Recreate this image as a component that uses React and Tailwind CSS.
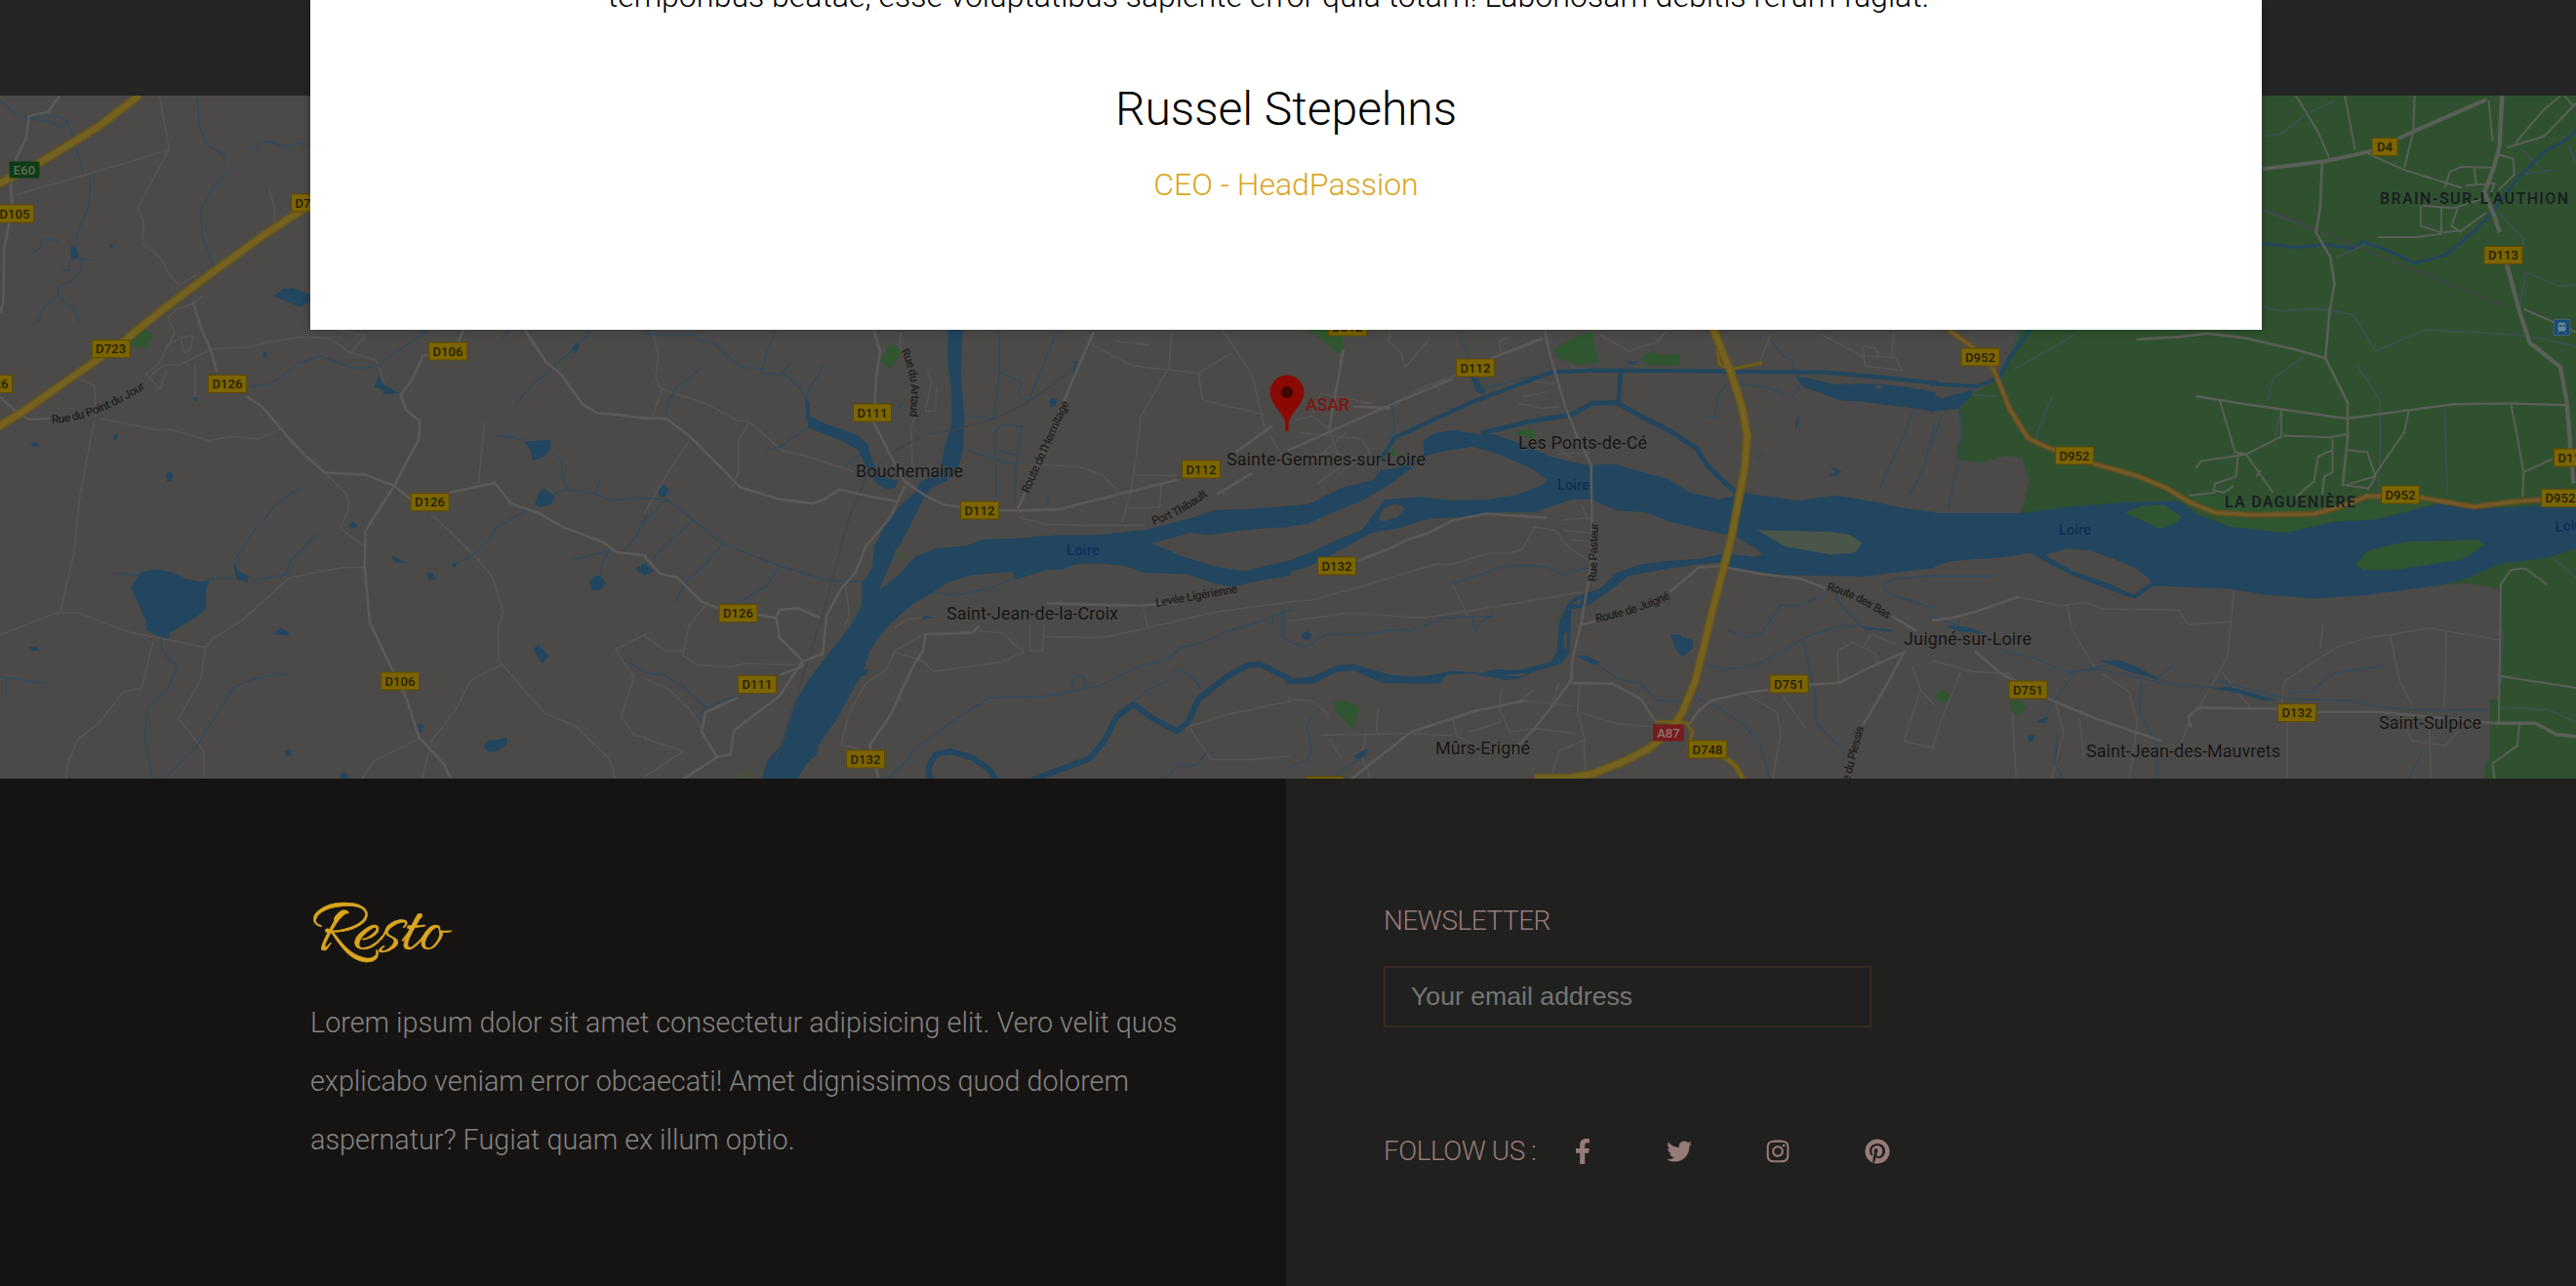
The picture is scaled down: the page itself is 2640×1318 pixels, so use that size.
import React from "react";
import { FaFacebookF, FaTwitter, FaInstagram, FaPinterest } from "react-icons/fa";

const WATER = "#22465f";
const LAND = "#4b4a48";
const GREEN = "#305130";

// Each tile lists shapes in its own grid; `transform` places the grid on the map.
const TILES = [
  {
    transform: "translate(0 80) scale(0.42092 0.45918)",
    water: [
      "M318 1137L345 1102 380 1096 415 1102 450 1118 485 1124 510 1122 502 1140 501 1186 480 1202 413 1238 410 1251 380 1244 356 1232 355 1210Z",
      "M569 1085L580 1100 605 1112 602 1126 575 1118Z",
      "M666 486L690 471 712 469 756 483 756 500 730 511 708 503Z",
      "M173 372L188 380 192 402 173 404Z",
      "M910 690L922 664 930 682 972 703 935 706 928 694Z",
      "M1275 812L1300 810 1340 808 1341 828 1322 846 1295 855 1293 832Z",
      "M1302 952L1312 926 1326 916 1351 934 1342 950 1318 958Z",
      "M1434 1125L1445 1112 1462 1110 1475 1128 1462 1142 1442 1144Z",
      "M1298 1275L1309 1265 1338 1290 1320 1307Z",
      "M1177 1492L1190 1478 1210 1477 1235 1471 1236 1484 1215 1501 1190 1504Z",
      "M404 885L410 878 422 882 418 900 407 902Z",
      "M952 1066L968 1072 989 1082 962 1082Z",
      "M1037 1104L1053 1104 1061 1117 1047 1121Z",
      "M848 1000L860 989 871 1000 858 1005Z",
      "M662 1240L685 1227 704 1238 700 1245Z",
      "M690 1503L702 1498 711 1508 700 1514Z",
      "M1017 1443L1030 1443 1027 1460 1019 1458Z",
      "M828 1555L840 1548 850 1562 828 1568Z",
      "M638 614L648 611 651 622 642 624Z",
      "M74 814L90 813 97 821 82 823Z",
      "M276 796L288 793 285 805 279 808Z",
      "M72 1270L92 1269 92 1278 72 1279Z",
      "M470 712L480 711 482 720 474 721Z",
      "M1390 606L1402 590 1412 598 1400 615Z",
      "M1100 1085L1112 1080 1110 1090 1102 1091Z",
      "M1548 1095L1575 1080 1575 1108 1555 1103Z",
      "M266 370L275 370 274 380 268 380Z",
    ],
    green: ["M318 580L350 558 370 574 356 604 318 597Z"],
    streams: [
      "M0 50L45 85 130 100 150 108 165 95 205 215",
      "M70 88L140 85 165 96",
      "M480 40L485 110 510 155 545 170 546 188",
      "M606 158L655 141 690 155 725 145 756 150",
      "M565 198L515 250 490 295 492 350 522 426",
      "M220 218L217 285 188 345 182 370",
      "M78 394L100 376 102 360 138 362 140 372",
      "M190 400L202 405 235 408",
      "M200 405L198 430 180 450 142 465 140 484 105 515 98 535 80 552",
      "M140 484L180 515 194 545",
      "M172 404L168 430 150 427",
      "M612 688L660 683 720 640 780 620 860 648 915 644 1040 565",
      "M1208 797L1275 808 M1208 797L1250 800",
      "M1255 728L1300 682 1400 603 1440 563",
      "M1341 832L1367 855 1370 890 1383 922",
      "M1351 927L1380 918 1450 928 1485 942 1575 938",
      "M1462 895L1450 928",
      "M1290 960L1210 1003 1190 1030 1155 1062 1105 1088",
      "M728 915L680 945 610 1020 572 1075 572 1100",
      "M770 1018L705 1080 698 1108 615 1122",
      "M570 1115L510 1118 500 1126",
      "M278 1105L345 1110",
      "M392 1250L395 1280 430 1315 410 1360 360 1405 352 1470 372 1568",
      "M697 1329L620 1340 570 1360 535 1410 480 1490 405 1560",
      "M0 1336L112 1352 M14 1338L14 1375",
      "M1462 1110L1470 1075 1485 1055 1395 1074",
      "M1520 1058L1550 1020 1575 975",
      "M1520 1298L1575 1330",
      "M1215 592L1240 562",
    ],
    roads: [
      "M145 40L118 75 70 85 65 130 40 180 26 240 30 290 10 380 8 500 0 525",
      "M0 712L40 745 70 762 120 760",
      "M470 500L490 560 512 605 528 655",
      "M600 710L640 735 700 800 740 840 792 881 888 885 960 910 1000 940",
      "M1095 925L1205 904 1245 950 1310 970 1370 1002 1470 1036 1500 1058 1575 1066",
      "M1128 562L1112 600 1030 620 1005 670 975 708 990 742 1022 765 1020 805 960 910 890 1010 888 1090 900 1215 950 1310 990 1385 1020 1472 1080 1530 1100 1568",
      "M1278 563L1330 635 1365 660 1420 730 1455 748 1490 750 1575 760",
    ],
    lanes: [
      "M388 40L412 158 335 290 350 320 347 370 390 400 410 435 437 462 478 440",
      "M412 160L220 213 40 260",
      "M655 245L668 290 668 330",
      "M160 1568L165 1530 190 1475 240 1440 300 1370 345 1362 372 1260",
      "M0 1243L140 1193 190 1194 320 1238 500 1270 520 1250 590 1210 705 1115 830 1093 888 1092",
      "M500 1270L490 1340 435 1430 495 1500 498 1568",
      "M228 770L195 930 180 1060 147 1190",
      "M245 760L380 785 420 786 510 810 560 800 630 805 690 780",
      "M370 660L400 640 440 640 512 605 610 600 650 590 730 578 800 580 850 612 915 630 945 700 972 700",
      "M495 485L465 505 430 515 410 535 425 570 385 640 355 660 390 695 405 650",
      "M440 580L450 615 465 600 470 575 440 580 400 600",
      "M792 881L845 930 850 960 828 1005 888 1045",
      "M1180 765L1165 905",
      "M1050 975L1100 1015 1165 1075 1200 1115 1225 1190 1212 1230 1215 1300 1280 1370 1330 1420 1400 1445 1485 1520 1500 1568",
      "M1220 1310L1145 1345 1110 1410 1050 1480 1028 1568",
      "M1020 1475L910 1525 880 1565",
      "M1545 1340L1498 1275 1575 1240 M1545 1335L1512 1425 1545 1468 1575 1470",
      "M180 668L230 685 233 755 M475 640L475 710 M815 560L890 575 855 612",
    ],
    highways: [["M-5 237L100 187 240 108 340 38", 9], ["M-5 779L60 742 180 665 300 588 400 514 520 432 640 352 760 280", 9]],
  },
  {
    transform: "translate(660 330) scale(0.42092 0.33333)",
    water: [
      "M739 20L776 20 772 160 780 290 778 380 768 440 740 485 700 510 680 545 650 620 600 740 572 825 620 778 660 722 710 695 785 688 825 668 910 665 1000 655 1100 655 1220 640 1340 600 1390 578 1470 575 1575 565 1575 630 1500 635 1370 655 1330 648 1235 680 1310 720 1400 755 1460 765 1575 733 1575 778 1480 800 1430 815 1380 800 1320 775 1220 772 1170 750 1100 742 1050 745 1015 762 980 762 905 792 895 768 800 778 740 800 700 835 650 870 590 940 550 1010 535 1070 500 1150 470 1220 425 1300 420 1330 395 1360 370 1410 285 1410 300 1350 340 1290 360 1190 400 1100 500 940 530 870 530 800 555 760 560 690 600 600 640 545 665 520 670 495 720 460 735 370 750 310 748 200 740 130Z",
      "M392 238L403 245 405 290 440 312 515 345 545 375 556 430 575 470 618 490 612 510 590 514 565 495 540 440 520 392 480 365 400 325 395 290Z",
      "M988 235L1006 237 1004 258 990 262Z",
      "M35 520L47 498 62 515 50 538 36 535Z",
      "M0 738L25 768 0 780Z",
      "M1048 118L1058 122 1055 152 1044 155Z",
      "M674 908L690 902 705 908 680 915Z",
      "M530 1070L550 1065 540 1085 524 1092Z",
    ],
    green: ["M575 120L598 66 622 80 622 105 600 142Z"],
    paleGreen: ["M612 694L650 728 625 740 612 712Z", "M222 1390L265 1378 255 1408 225 1408Z"],
    streams: [
      "M0 38L130 38 130 55 165 62 235 138 285 145 290 158 345 162 385 210 395 245",
      "M320 28L298 90 288 150 M357 128L335 158",
      "M438 135L400 210 394 238",
      "M142 140L80 200 60 240 52 290",
      "M410 315L330 385 295 395",
      "M523 408L490 442",
      "M0 540L60 550 130 620 190 682 330 750 440 792 535 800",
      "M190 682L150 745 100 800 75 865 M330 755L300 810 230 862",
      "M120 608L60 680 20 730 M55 545L0 618",
      "M0 1078L50 1085 95 1120 130 1165 155 1185 228 1148 M155 1185L118 1225",
      "M865 28L865 155 920 182 912 225 935 245 1005 30",
      "M865 155L852 298 780 288",
      "M780 395L905 437 M858 540L855 335 875 315 920 322 905 440 905 560 M860 395L910 410",
      "M700 832L760 840 840 820 895 790",
      "M590 1405L640 1350 660 1310 760 1220 840 1155 970 1152 1110 1118 1200 1060 1270 1040 1310 1000 1360 985 1420 950 1480 930 1575 885",
      "M1042 1132L1044 1095 1062 1085 1075 1100 1072 1132",
      "M1195 1165L1220 1135 1275 1105 1295 1070 1330 1085 1360 1132",
      "M1270 1405L1300 1360 1345 1365 1372 1320",
      "M985 540L982 565 M618 265L628 250",
      "M1530 895L1530 935 M1555 880L1555 970 1575 985",
    ],
    rivers: [
      ["M698 1408L692 1370 710 1330 745 1320 800 1340 840 1375 860 1410", 6],
      ["M945 1408L1085 1342 1120 1290 1150 1215 1192 1175 1240 1220 1298 1258 1325 1230 1350 1160 1420 1090 1470 1055 1500 1052 1575 1100", 6],
    ],
    roads: [
      "M0 295L55 298 110 350 235 508 330 545 410 558 440 545 475 515 520 528 615 552",
      "M560 28L575 90 565 170 560 310 600 410 635 490 680 530 730 562 775 570",
      "M865 580L910 580 1010 576 1170 525 1300 485",
      "M1395 530L1480 465 M910 575L960 435 1060 130 1095 30",
      "M635 505L600 600 540 690 515 770 480 820 445 900 435 1020 385 1045 330 1150 220 1255 210 1330 178 1338 90 1410",
      "M322 910L330 885 375 880 430 910 M322 910L330 970 385 1040 385 1060 330 1085",
      "M275 900L322 910 M178 1338L140 1260 150 1200 228 1155",
      "M0 720L40 775 80 785 140 860 180 880",
      "M570 1400L550 1300 600 1210 650 1070 680 1010 685 960 800 955 815 935",
      "M980 865L1200 872 1300 865 M1440 400L1530 320",
    ],
    lanes: [
      "M20 28L35 100 28 170 40 205 150 250 230 305 255 305 335 395 390 410 510 460",
      "M45 205L20 290 M255 310L230 365 230 460 215 510",
      "M110 365L60 460 0 590",
      "M150 870L110 930 95 1025 130 1055 210 1060 250 1050 390 1055",
      "M0 965L50 1010 95 1010 M0 1095L60 1130 110 1190 140 1250 M0 1280L95 1320 0 1400",
      "M625 30L625 90 M660 290L650 330 655 470",
      "M680 960L640 990 610 1010 590 1070 540 1110 500 1200 480 1300 545 1320",
      "M940 930L940 1010 970 1010 975 930 M815 950L870 955 925 1015 870 1045 705 1075 675 1040 610 1015",
      "M975 968L1120 970 1225 940 1400 890 1575 860 M1215 875L1228 945",
      "M1285 28L1278 140 1210 290 1200 400 1185 520 1165 615",
      "M1090 70L1190 135 1350 158 1430 95 M1350 158L1360 240 1510 285",
      "M1410 28L1480 160 1510 320 1575 450 M1150 60L1230 70",
      "M970 440L1060 445 1115 470 1155 520 M910 600L980 622 1080 625 1220 625 M1195 470L1300 472 M1260 495L1255 570 1180 570",
      "M610 940L640 915 700 905 M1300 1255L1410 1210 1575 1165 M1330 1250L1380 1345 1480 1345 1575 1335",
      "M690 155L700 180 685 275 710 272 712 200 M490 800L500 900 490 930",
    ],
    rails: ["M1060 120L1000 190 930 250 850 300 760 330 690 345 610 395 540 480 500 600 470 740 430 920 375 1140 320 1350"],
  },
  {
    transform: "translate(1320 330) scale(0.42092 0.33333)",
    water: [
      "M-5 567L50 560 130 510 210 485 225 455 260 450 330 420 330 365 350 345 400 332 465 345 500 345 580 380 640 415 740 445 750 438 800 438 870 465 920 480 980 525 1050 545 1120 527 1240 550 1330 533 1410 548 1490 570 1575 585 1575 757 1480 770 1400 782 1200 778 1130 765 1070 755 1060 738 1000 745 920 760 830 780 790 820 740 865 715 880 690 882 688 940 685 1020 665 1050 600 1075 560 1098 530 1100 440 1080 385 1085 370 1112 230 1110 160 1072 120 1075 60 1112 -5 1112 -5 1098 60 1090 120 1055 160 1053 250 1085 300 1090 340 1088 400 1072 470 1080 500 1068 560 1070 640 1045 655 1015 660 920 680 870 700 845 760 820 800 770 860 745 920 735 1000 728 1060 712 1140 722 1155 715 1140 695 1090 660 1000 635 930 615 870 585 800 580 740 545 690 545 600 585 500 585 420 600 340 605 280 630 200 650 130 700 50 752 -5 772 -5 738 60 705 120 670 180 640 210 590 235 545 320 538 400 548 490 545 560 530 620 500 632 485 600 455 520 410 450 383 385 395 340 410 300 450 240 505 180 550 100 590 50 620 -5 630Z",
      "M1235 170L1260 170 1330 192 1400 190 1450 192 1530 205 1575 215 1575 275 1500 262 1400 245 1340 240 1300 220 1255 200Z",
      "M445 168L462 175 472 205 482 212 476 222 460 215Z",
      "M932 962L955 960 958 970 985 975 985 1005 960 1028 945 1010Z",
      "M34 958L48 950 58 962 48 978 36 975Z",
      "M1315 470L1335 462 1318 440 1348 460 1335 475Z",
      "M818 122L858 120 840 132Z",
      "M700 1025L725 1025 762 1048 745 1055Z",
      "M1240 290L1244 292 1240 328 1235 325Z",
      "M1395 935L1475 948 1470 952 1405 945Z",
      "M160 1335L190 1312 196 1318 172 1345Z",
    ],
    green: [
      "M45 22L137 22 132 95 125 98Z",
      "M645 85L700 45 740 30 755 125 700 130 655 110Z",
      "M860 110L885 90 905 102 953 100 953 132 870 132Z",
      "M552 342L575 330 600 332 600 365Z",
      "M246 412L256 385 265 412Z",
      "M110 1168L130 1162 175 1185 160 1255 115 1195Z",
    ],
    sand: ["M1143 640L1320 645 1370 655 1397 680 1380 710 1320 715 1210 690Z"],
    islands: ["M220 610L232 572 262 558 286 572 268 600 235 613Z", "M672 1000L672 960 680 950 678 1010Z", "M520 1088L585 1078 570 1090Z", "M690 865L715 850 710 872Z", "M1428 192L1448 195 1440 208 1430 205Z"],
    streams: [
      "M410 28L435 90 470 200 M475 205L600 165",
      "M253 240L260 320 250 360",
      "M0 985L45 998 95 960 180 962 260 945 300 950 380 910 500 905",
      "M400 805L530 748 630 752 665 775 730 755 M500 900L475 915 455 950 448 905",
      "M60 1205L45 1240 58 1310 48 1345 0 1370",
      "M740 1040L800 1095 860 1115 900 1165 970 1165 990 1140 1000 1160 1060 1195 1110 1240 1150 1300 1170 1400",
      "M1020 1055L1060 1068 1130 1060 1200 1015 1260 970 1330 940 1390 932",
      "M1070 945L1110 970 1150 960 1200 870 1240 875 1310 835",
      "M1255 980L1270 1070 1285 1160 1285 1230 1345 1310 M1330 840L1360 890 1395 935",
      "M1520 275L1500 350 1440 510 M1575 310L1550 440 1515 530",
      "M1175 50L1205 105 1225 115 1250 190 1225 235 1180 205 1095 190",
      "M1068 190L1045 230 1040 290 1010 290",
      "M1155 405L1140 420 M1575 780L1470 790 1448 810 1470 840 1575 880",
      "M195 1325L130 1380 110 1410",
    ],
    rivers: [
      ["M225 425L260 355 450 245 640 155 740 149 940 150 1100 153 1310 155 1440 170 1580 188", 4.2],
      ["M810 150L805 240 800 250", 4.5],
      ["M470 342L590 305 690 285 740 250 800 248 860 290 930 335 995 390 1020 440 1060 490 1092 525", 5],
    ],
    roads: [
      "M625 28L640 110 675 260 700 340 738 440 740 600 740 730 715 920 692 1040 690 1100 650 1170 600 1250",
      "M1055 750L1000 755 930 830 M1070 755L1150 775 1250 790 1310 820 M1470 905L1530 950",
      "M715 930L750 920 M692 1110L790 1112 860 1160 895 1230",
      "M170 735L250 695 290 670 340 650 400 610 480 590 630 602",
      "M975 1240L1000 1195 1030 1165 1110 1140 1170 1132 M1268 1115L1340 1110 1420 1060 1500 1015 1460 1110 1400 1240",
      "M135 85L100 330 M0 395L160 305 240 260 400 175 M160 260L250 265 M410 150L520 100 620 50",
      "M600 1250L540 1330 M575 1165L460 1195 300 1260 200 1360 150 1410",
    ],
    lanes: [
      "M135 30L125 130 M250 28L245 60 275 95 285 140 340 60",
      "M0 860L60 855 200 805 290 770 360 745 400 745 490 710 540 710 570 700 600 630 650 640 690 700 730 730",
      "M0 920L150 895 330 910 480 880 580 860 715 830 M400 805L440 910",
      "M15 300L60 290 100 330 130 440 70 500 M30 340L180 360 200 400 120 470 M0 420L110 400 220 440 M60 280L80 220 200 250 M140 340L60 430",
      "M570 230L630 215 M580 180L650 190 M560 250L620 265 660 260 M700 60L690 140 760 150",
      "M760 40L830 90 900 60 920 30 M520 100L515 60 535 45",
      "M655 385L690 420 M680 370L725 365 M660 405L735 400 M665 610L740 600 M670 640L745 650 M690 670L735 675 M715 560L730 610",
      "M710 1110L705 1200 720 1270 725 1405 M710 1200L800 1235 895 1245 M575 1165L690 1180 M660 1110L640 1180",
      "M520 1130L515 1190 540 1260 600 1250 700 1265 M400 1215L410 1270 480 1320 M600 1130L560 1170 M190 1260L180 1340 200 1400 M80 1270L300 1265 400 1272 M0 1160L60 1165 100 1210",
      "M220 1185L215 1260 M100 1280L130 1340 M440 1260L520 1230 M730 1280L660 1320 640 1400",
      "M1110 1140L1190 1200 1200 1260 1180 1405 M1205 1150L1260 1250 M1340 1110L1338 1010 1375 985 1430 1020 1440 1060 M1400 1000L1420 960 1480 990",
      "M1520 1060L1540 1130 1575 1180 M1540 1130L1500 1290 1575 1310",
      "M1300 40L1400 105 1480 110 1495 150 1405 135 1400 75 1430 80 1440 110 M1475 30L1470 110 M1175 40L1150 120",
      "M330 200L440 150 M300 220L350 190 370 210",
    ],
    highways: [
      ["M1035 20L1060 100 1080 160 1105 260 1118 350 1112 450 1095 560 1080 660 1060 760 1035 880 1010 1010 990 1110 960 1200 930 1260 880 1310 820 1350 740 1390 680 1402 600 1402", 9],
      ["M1045 80L1050 130 1080 145 1155 125 M895 1228L970 1232 985 1260 975 1310", 4],
      ["M1060 1335L1090 1365 1110 1410", 6],
    ],
  },
  {
    transform: "translate(1980 80) scale(0.42092 0.45918)",
    greenFirst: [
      "M210 562L240 540 800 35 1575 35 1575 1568 1342 1568 1350 1525 1358 1520 1358 1388 1378 1385 1388 1220 1380 1140 1300 1128 1230 1133 1000 1060 215 972 238 900 218 848 180 843 120 858 62 852 60 820 75 800 70 770 65 740 105 700 165 672Z",
    ],
    water: [
      "M-5 971L220 971 320 958 450 948 600 943 650 975 720 1000 860 1015 980 990 1080 985 1230 950 1380 960 1480 955 1575 945 1575 1048 1500 1070 1380 1085 1300 1118 1230 1133 1050 1155 930 1162 800 1152 720 1140 540 1133 495 1162 420 1132 340 1108 275 1078 240 1060 170 1070 50 1078 -5 1092Z",
      "M-5 700L20 715 50 708 100 695 95 712 65 738 -5 745Z",
      "M30 1222L90 1226 130 1240 60 1234Z",
      "M408 1300L460 1300 500 1315 560 1345 480 1325Z",
      "M680 1362L720 1358 840 1388 810 1390 740 1372Z",
      "M252 1437L285 1425 275 1440Z M232 1468L250 1466 247 1480 236 1481Z",
    ],
    land: ["M275 1065L330 1050 390 1055 500 1095 535 1125 490 1153 430 1128 340 1100Z"],
    green: [
      "M468 970L510 955 565 952 608 980 590 995 555 1005Z",
      "M600 943L660 970 720 1000 860 1015 980 990 1080 985 1230 950 1200 940 900 960 650 930Z",
      "M1032 1085L1060 1055 1150 1035 1330 1030 1347 1042 1290 1075 1130 1097 1050 1098Z",
      "M8 1375L25 1366 42 1375 38 1395 12 1388Z",
      "M188 1390L215 1388 230 1405 208 1424 195 1415Z",
    ],
    streams: [
      "M0 1112L152 1112 M70 745L70 830 40 960 M0 820L25 750",
      "M0 1200L130 1245 180 1280 250 1295 330 1325 410 1320 560 1350 680 1360 M350 1325L310 1375 270 1430 M330 1330L425 1310",
      "M510 1350L505 1420 545 1480 550 1568 M305 1460L300 1530 320 1568 M590 1310L540 1345",
      "M690 1345L800 1370 860 1385 1030 1390 1090 1405 1230 1412 1350 1410 M870 1372L920 1370 980 1328 1100 1312",
      "M1195 1500L1160 1568",
    ],
    creeks: [
      "M805 130L850 125 910 80 980 50 M805 295L950 345",
      "M805 510L850 520 920 515 975 520 1025 528 1060 580 1080 610 1200 562 1330 568 1450 575 1575 600",
      "M985 400L1060 370 M350 572L200 650 M215 562L190 620 M295 705L270 760 252 800 M910 618L830 670 818 720",
      "M1035 640L1090 720 1092 810 1085 980 M1248 735L1255 930 M850 740L835 800",
      "M1448 430L1430 510 M1450 435L1530 465 1575 460 M1380 300L1440 360 1440 380 M1510 205L1440 215 M1550 150L1570 200 M1430 155L1480 200",
      "M1390 1230L1385 1350 M1385 1405L1500 1410 1575 1440 M1510 1070L1575 1120 M75 705L160 710",
    ],
    rivers: [
      ["M803 368L880 378 960 372 1020 380 1050 365 1110 385 1175 413 1250 395 1310 350 1360 305 1420 230 1490 165 1540 140 1575 110", 3],
      ["M-5 682L110 688 165 668 185 630 240 560", 4],
      ["M270 1070L350 1108 420 1132 490 1156 540 1125", 5],
    ],
    greenRoads: [
      ["M805 203L960 185 1075 162", 4],
      ["M1135 135L1190 112 1350 48", 4],
      ["M1388 38L1382 150 1368 200 1345 255 1370 310 1382 345 M1398 410L1430 520 1455 590 1530 645 1545 720 1562 905", 4.4],
      ["M885 38L940 120 968 180 M1005 38L1030 160 M1175 38L1172 120 1150 200 M1060 168L1150 205 1290 245", 2],
      ["M950 185L945 290 935 345 970 400 980 460 968 520 958 625 1012 725 1012 800 1000 910", 2.6],
      ["M498 583L600 578 670 570 760 580 880 605 958 625", 2.6],
      ["M642 710L780 730 1010 760 1130 745 1270 728 1400 726 1545 730", 2.4],
      ["M700 718L738 835 765 840 M642 872L655 855 765 840 850 800 850 738 M855 798L970 802 1010 795 M765 840L830 925 M745 840L740 890 690 905 685 920 710 925 735 910 M790 890L800 875 M625 932L690 925", 2],
      ["M1160 745L1150 790 1075 890 1000 910 M1060 920L1080 890 1060 835 1010 830 M975 830L940 845 930 900 880 940 M975 805L975 880 955 890 950 930 M1010 910L1060 915", 2],
      ["M1410 730L1425 800 1440 880 1438 935 M1440 880L1510 850", 2],
      ["M1190 285L1190 330 1240 345 1290 340 1350 300 M1195 285L1270 290 1340 270 M1085 355L1180 355 1240 348 M1240 290L1240 345 M1280 290L1265 330 1290 345 M1250 245L1260 210 1290 198 1370 200 M1300 240L1370 235 1360 260 M1320 200L1325 235", 2],
      ["M1355 50L1365 140 M1420 145L1490 70 1530 40 M1375 170L1415 180 1418 215 1380 250 M1400 155L1490 130 1575 50 M1540 40L1560 60", 2],
      ["M1370 1440L1470 1440 1520 1465 1575 1470", 3.4],
      ["M1380 1440L1385 1130 1410 1097 1445 1095 1497 1130 M1385 1335L1575 1362 M1430 1445L1425 1490 1365 1530 1370 1568", 2],
      ["M1440 515L1575 570", 2],
    ],
    roads: [
      "M105 1280L170 1330 200 1345 M282 1385L400 1430 560 1480",
      "M630 1450L625 1425 650 1405 850 1408 M940 1415L1090 1415 1370 1440",
      "M0 1210L50 1205 110 1190 210 1158",
    ],
    lanes: [
      "M210 1158L310 1178 370 1170 420 1185 600 1187 625 1220 725 1213 M735 1145L720 1290 690 1340 650 1405",
      "M330 1178L340 1230 400 1320 M0 1300L100 1325 190 1330 205 1345 M70 1325L20 1440 0 1500",
      "M195 1400L205 1568 M300 1390L320 1460 290 1568 M360 1430L370 1520 M415 1330L480 1370 500 1440 480 1568",
      "M850 1400L860 1345 990 1268 1060 1250 1115 1242 1210 1228 1385 1255 M1115 1242L1140 1350 1170 1400 M1253 1235L1248 1400 M952 1220L945 1275",
      "M865 1430L865 1568 M625 1440L600 1500 M700 1320L780 1410 M1130 1415L1170 1480 1250 1490 1300 1440 M1210 1415L1215 1568",
    ],
    rails: ["M805 290L950 345 1150 420 1400 510"],
    amber: [["M40 562L110 608 150 650 190 740 235 805 290 828 390 860 500 888 570 915 630 948 690 970 780 975 930 973 1000 955 1060 933 1180 935 1320 957 1420 945 1575 935", 6]],
  },
];

const BADGES = [
  [15, 219, "D105"], [318, 208, "D723"], [113.6, 357.5, "D723"], [-7, 393.5, "D126"], [233, 393.5, "D126"],
  [459, 360, "D106"], [440.5, 514.5, "D126"], [410, 698, "D106"], [894, 423, "D111"], [1004, 523, "D112"],
  [756.5, 628.5, "D126"], [776, 701.5, "D111"], [887, 778, "D132"], [1231, 481, "D112"], [1381, 335, "D312"],
  [1512, 377, "D112"], [1370, 580, "D132"], [1833.5, 701, "D751"], [1750, 768, "D748"], [1357.5, 805, "D123"],
  [2029.5, 366, "D952"], [2126, 467, "D952"], [2565.5, 261.5, "D113"], [2637, 469, "D113"], [2460, 507, "D952"],
  [2624, 510.5, "D952"], [2078.5, 707, "D751"], [2354, 730.5, "D132"],
];

const TOWNS = [
  [877, 489, "Bouchemaine", 110], [970, 635, "Saint-Jean-de-la-Croix", 176], [1257, 477, "Sainte-Gemmes-sur-Loire", 204],
  [1556, 460, "Les Ponts-de-Cé", 132], [1471, 773, "Mûrs-Erigné", 97], [1951, 661, "Juigné-sur-Loire", 131],
  [2138, 776, "Saint-Jean-des-Mauvrets", 199], [2438, 747, "Saint-Sulpice", 105],
];

const STREETS = [
  ["s1", "M53 434Q97 432 152 396", "Rue du Point du Jour", 104],
  ["s2", "M923 360Q938 385 932 430", "Rue du Artaud", 69],
  ["s3", "M1054 506L1096 412", "Route de l'Hermitage", 102],
  ["s4", "M1182 538Q1212 529 1240 506", "Port Thibault", 64],
  ["s5", "M1185 622L1270 607", "Levée Ligérienne", 85],
  ["s6", "M1636 596L1638 530", "Rue Pasteur", 60],
  ["s7", "M1636 638Q1680 629 1715 612", "Route de Juigné", 80],
  ["s8", "M1872 605Q1900 611 1938 637", "Route des Bas", 70],
  ["s9", "M1892 814L1911 742", "Rue du Plessis", 71],
];

const Paths = ({ items = [], fill }) => items.map((d) => <path key={d} d={d} fill={fill} />);
const Lines = ({ items = [], stroke, width }) =>
  items.map((d) => (
    <path key={d} d={d} fill="none" stroke={stroke} strokeWidth={width} strokeLinejoin="round" vectorEffect="non-scaling-stroke" />
  ));
const Wide = ({ items = [], stroke, extra = 0 }) =>
  items.map(([d, w]) => (
    <path key={d} d={d} fill="none" stroke={stroke} strokeWidth={Math.max(0.8, w + extra)} strokeLinejoin="round" vectorEffect="non-scaling-stroke" />
  ));

function Badge({ x, y, text, w = 40, h = 19, fill = "#7c6400", border = "#5c4a00", color = "#261f04" }) {
  return (
    <g>
      <rect x={x - w / 2 + 0.5} y={y - h / 2 + 0.5} width={w - 1} height={h - 1} fill={fill} stroke={border} />
      <text x={x} y={y + 4.6} textAnchor="middle" fontSize="13" fontWeight="500" fill={color} letterSpacing="0.1">{text}</text>
    </g>
  );
}

function RegionMap() {
  return (
    <svg className="block h-[700px] w-[2640px] shrink-0" viewBox="0 98 2640 700" fontFamily="Roboto, sans-serif">
      <rect x="0" y="98" width="2640" height="700" fill={LAND} />
      {TILES.map((t) => (
        <g key={t.transform} transform={t.transform}>
          <Paths items={t.greenFirst} fill={GREEN} />
          <Lines items={t.lanes} stroke="#555453" width={1.7} />
          <Lines items={t.streams} stroke="#314b5c" width={1.5} />
          <Lines items={t.creeks} stroke="#3b5150" width={1.8} />
          <Paths items={t.water} fill={WATER} />
          <Wide items={t.rivers} stroke={WATER} />
          <Paths items={t.land} fill={LAND} />
          <Paths items={t.islands} fill={LAND} />
          <Paths items={t.sand} fill="#4a5648" />
          <Paths items={t.paleGreen} fill="#47503f" />
          <Paths items={t.green} fill="#2f5631" />
          <Lines items={t.rails} stroke="#434548" width={1.8} />
          <Lines items={t.roads} stroke="#5b5a59" width={2.6} />
          <Wide items={t.greenRoads} stroke="#5a5f57" />
          <Wide items={t.highways} stroke="#68571a" />
          <Wide items={t.highways} stroke="#766220" extra={-3.5} />
          <Wide items={t.amber} stroke="#654f22" />
          <Wide items={t.amber} stroke="#735a29" extra={-3} />
        </g>
      ))}
      {BADGES.map(([x, y, text]) => <Badge key={`${x}-${y}`} x={x} y={y} text={text} />)}
      <Badge x={2444} y={150.5} w={27} text="D4" />
      <Badge x={25} y={174} w={31} h={17} text="E60" fill="#0d3d14" border="#0d3d14" color="#62695f" />
      <Badge x={1710} y={751} w={32} h={17} text="A87" fill="#781b1d" border="#781b1d" color="#8f7775" />
      <g>
        <rect x="2617.5" y="327.5" width="16" height="16" fill="#174a78" stroke="#3c6179" />
        <rect x="2621.5" y="330.5" width="8" height="9" rx="2" fill="#68849a" />
        <path d="M2623 333h2v2h-2zM2626.5 333h2v2h-2z" fill="#174a78" />
        <path d="M2621 341.5l2-2M2630 341.5l-2-2" stroke="#68849a" />
      </g>
      {TOWNS.map(([x, y, text, w]) => (
        <text key={text} x={x} y={y} textLength={w} fontSize="18" fontWeight="400" fill="#161514" stroke="#4f4e4c" strokeWidth="1.5" paintOrder="stroke">{text}</text>
      ))}
      <text x="2439" y="209" textLength="193" fontSize="16" fontWeight="600" fill="#192022">BRAIN-SUR-L&apos;AUTHION</text>
      <text x="2280" y="520" textLength="134" fontSize="16" fontWeight="600" fill="#192022">LA DAGUENIÈRE</text>
      <g fontSize="15" fill="#0f2f56" fontWeight="500">
        <text x="1093" y="568.5" textLength="34">Loire</text>
        <text x="1596" y="502" textLength="33">Loire</text>
        <text x="2110" y="548" textLength="33">Loire</text>
        <text x="2619" y="545" textLength="33" transform="rotate(-5 2619 545)">Loire</text>
      </g>
      <defs>
        {STREETS.map(([id, d]) => <path key={id} id={id} d={d} />)}
      </defs>
      {STREETS.map(([id, , text, w]) => (
        <text key={id} fontSize="12" fontWeight="500" fill="#22211f"><textPath href={`#${id}`} textLength={w}>{text}</textPath></text>
      ))}
      <path d="M1319 440C1318 424 1302 416 1301.5 402a17.5 17.5 0 0 1 35 0C1336 416 1320 424 1319 440Z" fill="#8a0a03" />
      <path d="M1317 425h4l-0.5 17h-3z" fill="#8a0a03" />
      <circle cx="1319" cy="402" r="6" fill="#3d0603" />
      <text x="1338" y="421" textLength="45" fontSize="18" fontWeight="500" fill="#7c1714">ASAR</text>
    </svg>
  );
}

function TestimonialCard() {
  return (
    <div className="absolute top-0 left-[318px] flex h-[338px] w-[2000px] flex-col items-center overflow-hidden bg-white text-black shadow-[0_0_8px_rgba(0,0,0,0.3)]">
      <p className="-mt-[36px] h-[64px] pr-[36px] text-[32px] leading-[64px] font-light whitespace-nowrap">temporibus beatae, esse voluptatibus sapiente error quia totam! Laboriosam debitis rerum fugiat.</p>
      <h3 className="mt-[52px] text-[48px] leading-[64px] font-light">Russel Stepehns</h3>
      <p className="mt-[22px] text-[32px] leading-[46px] font-light text-[#daa520]">CEO - HeadPassion</p>
    </div>
  );
}

const SOCIAL = [FaFacebookF, FaTwitter, FaInstagram, FaPinterest];

function Footer() {
  return (
    <footer className="flex h-[520px]">
      <div className="w-[1318px] bg-[#161412] pt-[120px] pl-[318px]">
        <h2 className="h-[80px] pl-[1px] font-['Allura',cursive] text-[80px] leading-[80px] font-normal text-[#daa520] [-webkit-text-stroke:0.6px_#daa520]">Resto</h2>
        <p className="mt-[20px] w-[920px] text-[28.78px] leading-[60px] font-light text-[#858484]">
          Lorem ipsum dolor sit amet consectetur adipisicing elit. Vero velit quos<br />
          explicabo veniam error obcaecati! Amet dignissimos quod dolorem<br />
          aspernatur? Fugiat quam ex illum optio.
        </p>
      </div>
      <div className="flex-1 bg-[#20201e] pt-[129px] pl-[100px] text-[#967b79]">
        <h4 className="text-[28px] leading-[34px] font-light tracking-[-0.5px]">NEWSLETTER</h4>
        <input
          className="mt-[29px] block h-[63px] w-[500px] border-2 border-[#362b23] bg-transparent px-[26px] font-['Liberation_Sans'] text-[26.667px] text-[#757575] outline-none placeholder:text-[#757575]"
          placeholder="Your email address"
        />
        <div className="mt-[108px] flex h-[38px] items-center">
          <span className="w-[191px] text-[28px] leading-[38px] font-light tracking-[-0.5px]">FOLLOW US :</span>
          <div className="flex gap-[75.5px]">
            {SOCIAL.map((Icon, i) => (
              <Icon key={i} className="size-[26px] first:-mr-[3px]" />
            ))}
          </div>
        </div>
      </div>
    </footer>
  );
}

export default function App() {
  return (
    <div className="relative h-[1318px] w-[2640px] overflow-hidden bg-[#161412] font-['Roboto',sans-serif]">
      <div className="h-[98px] bg-[#252525]" />
      <RegionMap />
      <TestimonialCard />
      <Footer />
    </div>
  );
}
